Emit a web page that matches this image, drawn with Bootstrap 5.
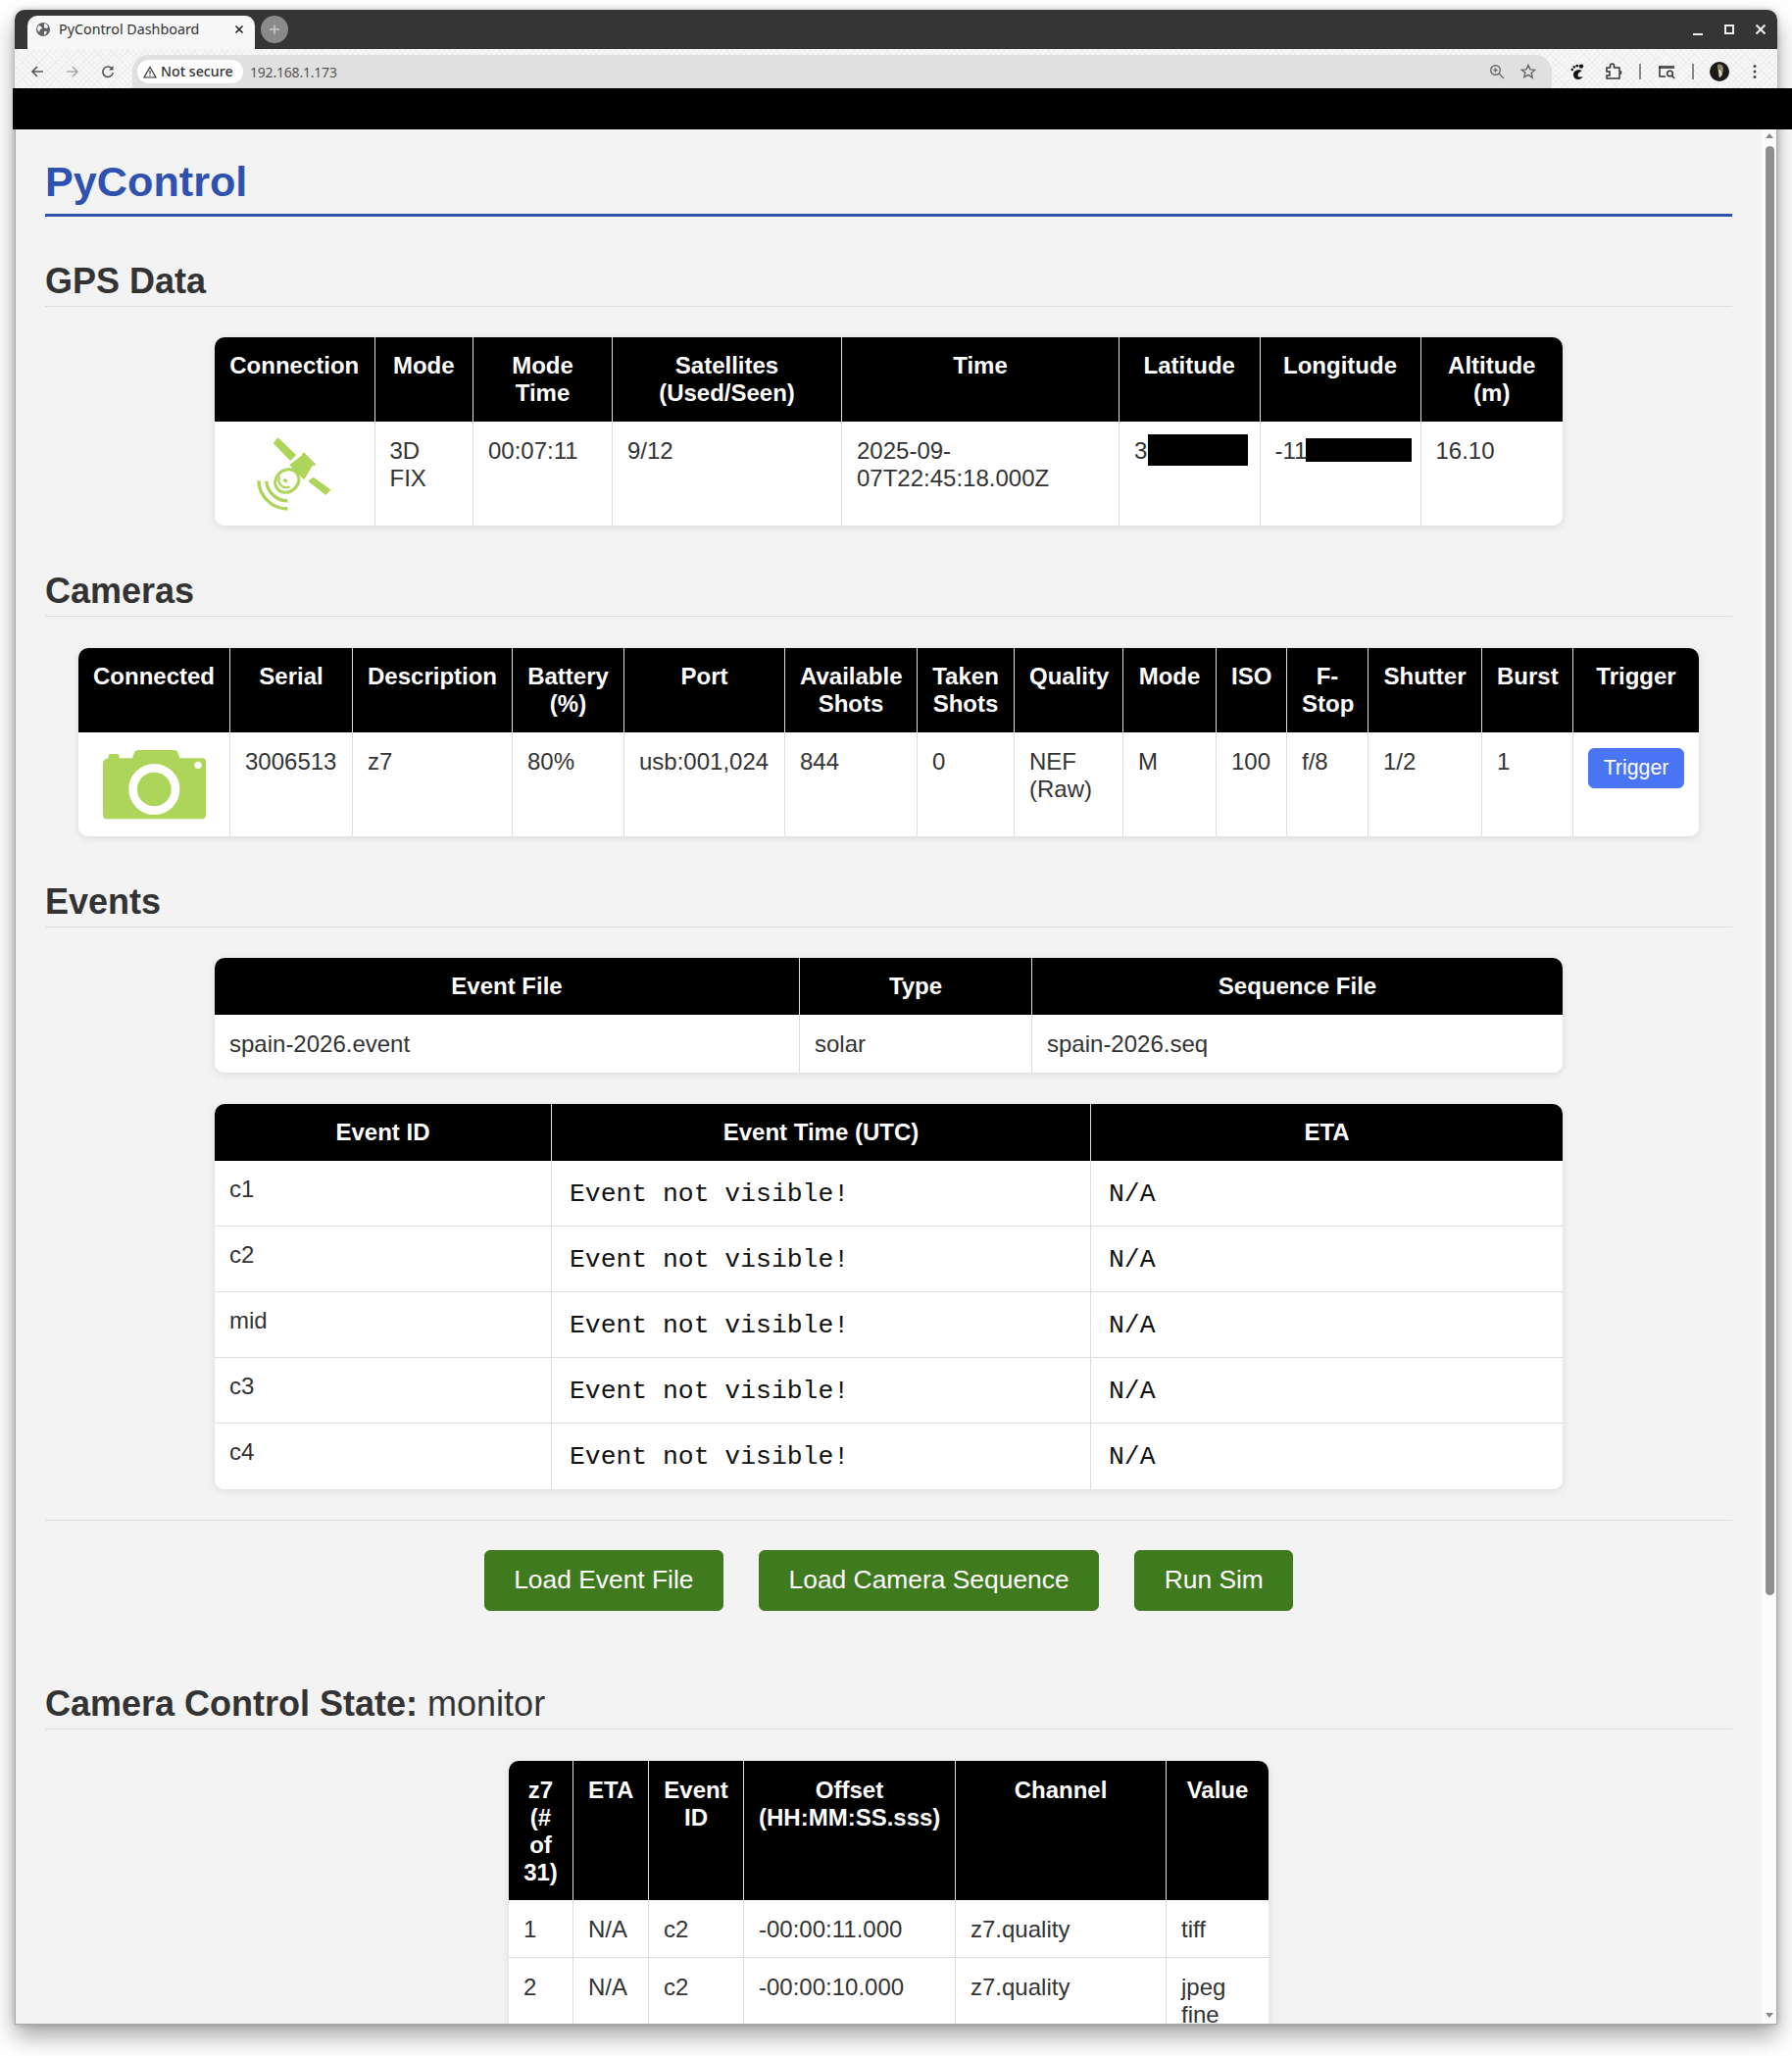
<!DOCTYPE html>
<html lang="en">
<head>
    <meta charset="UTF-8">
    <meta name="viewport" content="width=device-width, initial-scale=1.0">
    <title>PyControl Dashboard</title>
    <link href="https://cdn.jsdelivr.net/npm/bootstrap@5.3.0/dist/css/bootstrap.min.css" rel="stylesheet">
    <style>
        html, body { height: 100%; overflow: hidden; background: #fff; }
        .win-shell {
            width: 1798px; height: 2055px; margin: 10px 0 0 15px;
            display: flex; flex-direction: column;
            border-radius: 10px 10px 0 0;
            box-shadow: 0 12px 24px rgba(0,0,0,.35), 0 0 6px rgba(0,0,0,.2);
        }
        .title-strip {
            height: 40px; flex: none; background: #353535; border-radius: 10px 10px 0 0;
            padding: 6px 10px 0 13px; color: #e8e8e8;
            font-family: "Noto Sans", sans-serif;
        }
        .tab-chip {
            width: 232px; height: 34px; background: #f7f7f7; border-radius: 10px 10px 0 0;
            padding: 0 11px 6px 8px; font-size: 14.3px; color: #333; gap: 8px;
        }
        .tab-label { flex: 1; white-space: nowrap; }
        .new-tab { width: 28px; height: 28px; border-radius: 50%; background: #8a8a8a; margin-left: 6px; }
        .win-btns { gap: 18px; margin-top: -6px; }
        .tool-strip {
            height: 40px; flex: none; padding-top: 6px;
            font-family: "Noto Sans", sans-serif;
            background-color: #f8f8f8;
            background-image: repeating-linear-gradient(45deg, #eee 0 1px, transparent 1px 4px), repeating-linear-gradient(-45deg, #eee 0 1px, transparent 1px 4px);
        }
        .nav-icons { width: 120px; padding-left: 16px; gap: 22px; flex: none; }
        .omni {
            width: 1448px; height: 34px; background: #e0e0e0; border-radius: 17px 17px 0 0;
            padding: 5px 0 0 5px; flex: none;
        }
        .omni-pill {
            height: 24px; width: 108px; background: #fff; border-radius: 12px; font-weight: 500;
            color: #333; padding-left: 6px; gap: 4px; font-size: 14.2px; white-space: nowrap;
        }
        .omni-url { color: #555; height: 24px; margin-left: 7px; font-size: 14px; letter-spacing: -.2px; }
        .omni-tail { margin-left: auto; gap: 16px; padding: 0 16px 5px 0; }
        .tool-tail { flex: 1; padding-left: 19px; }
        .tool-sep { width: 2px; height: 16px; background: #888; }
        .space-21 { margin-right: 21px; }
        .space-17 { margin-right: 17px; }
        .space-16 { margin-right: 16px; }
        .space-24 { margin-right: 24px; }
        .black-strip { height: 42px; flex: none; background: #000; margin: 0 -15px 0 -2px; }
        .page-pane {
            flex: 1; min-height: 0; display: flex;
            border: solid #a9a9a9; border-width: 0 1px 1px 1px;
        }
        .page-main {
            flex: 1; overflow: hidden; background: #f3f3f3; padding: 0 30px;
            font-family: "Liberation Sans", Arial, sans-serif; color: #333;
        }
        .scroll-rail {
            width: 15px; flex: none; background: #fbfbfb; padding: 0 2px 0 3px;
            display: flex; flex-direction: column; align-items: center;
        }
        .arrow-up { margin-top: 4px; width: 0; height: 0; border: solid transparent; border-width: 0 4.5px 5px; border-bottom-color: #888; }
        .scroll-thumb { width: 9px; height: 1478px; margin-top: 8px; background: #8f8f8f; border-radius: 5px; }
        .arrow-down { margin-top: auto; margin-bottom: 6px; width: 0; height: 0; border: solid transparent; border-width: 5px 4.5px 0; border-top-color: #888; }
        .brand-title {
            font-family: inherit; font-size: 43.2px; font-weight: 700; line-height: 49px; color: #2f52b0;
            margin: 0; padding: 29px 0 8px; border-bottom: 3px solid #2f52b0;
        }
        .section-title {
            font-family: inherit; font-size: 36px; font-weight: 700; line-height: 41px; color: #333;
            margin: 0 0 15px; padding-bottom: 5px; border-bottom: 1px solid #ddd;
        }
        .section-title span { font-weight: 400; }
        .gap-gps { margin-top: 45px; }
        .gap-sec { margin-top: 46px; }
        .gap-ctl { margin-top: 74px; }
        .data-grid {
            table-layout: fixed; margin: 0 auto; border-collapse: separate; border-spacing: 0;
            font-size: 24px; line-height: 28px; color: #333; background: #fff;
            border-radius: 10px; box-shadow: 0 2px 8px rgba(0,0,0,.1);
        }
        .data-grid>:not(caption)>*>* {
            padding: 15px; border: 0; border-right: 1px solid #ddd; border-bottom: 1px solid #ddd;
            background: #fff; color: #333; box-shadow: none; vertical-align: top; position: relative;
        }
        .data-grid>:not(caption)>*>*:last-child { border-right: 0; }
        .data-grid>tbody>tr:last-child>* { border-bottom: 0; }
        .data-grid>thead>tr>th {
            background: #000; color: #fff; font-weight: 700; text-align: center;
            border-bottom: 0; border-right-color: #ddd;
        }
        .data-grid>thead>tr>th:first-child { border-top-left-radius: 10px; }
        .data-grid>thead>tr>th:last-child { border-top-right-radius: 10px; }
        .data-grid>tbody>tr:last-child>td:first-child { border-bottom-left-radius: 10px; }
        .data-grid>tbody>tr:last-child>td:last-child { border-bottom-right-radius: 10px; }
        .grid-gap { margin-top: 32px; }
        .grid-gps { width: 1375px; margin-top: 31px; }
        .grid-cam { width: 1653px; }
        .grid-evt { width: 1375px; margin-top: 31px; }
        .grid-times { width: 1375px; }
        .grid-ctl { width: 775px; }
        .data-grid.grid-gps>tbody>tr>td, .data-grid.grid-cam>tbody>tr>td { padding-top: 16px; padding-bottom: 14px; }
        .data-grid.grid-evt>tbody>tr>td { padding-top: 16px; }
        .data-grid.grid-ctl>thead>tr>th, .data-grid.grid-ctl>tbody>tr>td { padding-top: 16px; padding-bottom: 14px; }

        .grid-gps col:nth-child(1) { width: 163.5px; }
        .grid-gps col:nth-child(2) { width: 100.5px; }
        .grid-gps col:nth-child(3) { width: 142px; }
        .grid-gps col:nth-child(4) { width: 234px; }
        .grid-gps col:nth-child(5) { width: 283px; }
        .grid-gps col:nth-child(6) { width: 143.5px; }
        .grid-gps col:nth-child(7) { width: 164px; }
        .grid-gps col:nth-child(8) { width: 144.5px; }

        .grid-cam col:nth-child(1) { width: 155px; }
        .grid-cam col:nth-child(2) { width: 125px; }
        .grid-cam col:nth-child(3) { width: 163px; }
        .grid-cam col:nth-child(4) { width: 114px; }
        .grid-cam col:nth-child(5) { width: 164px; }
        .grid-cam col:nth-child(6) { width: 135px; }
        .grid-cam col:nth-child(7) { width: 99px; }
        .grid-cam col:nth-child(8) { width: 111px; }
        .grid-cam col:nth-child(9) { width: 95px; }
        .grid-cam col:nth-child(10) { width: 72px; }
        .grid-cam col:nth-child(11) { width: 83px; }
        .grid-cam col:nth-child(12) { width: 116px; }
        .grid-cam col:nth-child(13) { width: 93px; }
        .grid-cam col:nth-child(14) { width: 128px; }

        .grid-evt col:nth-child(1) { width: 597px; }
        .grid-evt col:nth-child(2) { width: 237px; }
        .grid-evt col:nth-child(3) { width: 541px; }

        .grid-times col:nth-child(1) { width: 344px; }
        .grid-times col:nth-child(2) { width: 550px; }
        .grid-times col:nth-child(3) { width: 481px; }

        .grid-ctl col:nth-child(1) { width: 66px; }
        .grid-ctl col:nth-child(2) { width: 77px; }
        .grid-ctl col:nth-child(3) { width: 97px; }
        .grid-ctl col:nth-child(4) { width: 216px; }
        .grid-ctl col:nth-child(5) { width: 215px; }
        .grid-ctl col:nth-child(6) { width: 104px; }

        .data-grid>tbody>tr>td.mono-cell {
            font-family: "Liberation Mono", "Courier New", monospace; font-size: 26.4px; color: #111; line-height: 30px;
            padding: 19px 15px 17px 18px;
        }
        .time-row>td { height: 67px; }
        .data-grid>tbody>tr>td.img-center { text-align: center; padding: 15px 0; }
        .data-grid>tbody>tr>td.cam-cell { padding: 18px 0 12px; }
        .status-icon { display: block; margin: 0 auto; }
        .redact-box { position: absolute; background: #000; }
        .redact-lat { left: 29px; top: 13px; width: 102px; height: 32px; }
        .redact-lon { left: 46px; top: 17px; width: 108px; height: 24px; }
        .trigger-btn {
            --bs-btn-bg: #4a76f5; --bs-btn-border-color: #4a76f5;
            font-size: 21.3px; line-height: 25px; padding: 7px 14px; border-radius: 6px; width: 98px;
        }
        .rule-line { margin: 31px 0 30px; border: 0; border-top: 1px solid #ddd; opacity: 1; }
        .action-row { gap: 36px; }
        .action-btn {
            --bs-btn-bg: #3f7a1e; --bs-btn-border-color: #3f7a1e;
            font-size: 26.4px; line-height: 29.5px; padding: 15px 29.5px; border-radius: 6px;
        }
    </style>
</head>
<body>
    <div class="win-shell">
        <div class="title-strip d-flex">
            <div class="tab-chip d-flex align-items-center">
                <svg width="16" height="16" viewBox="0 0 16 16"><circle cx="8" cy="8" r="7" fill="#5f6368"/><path d="M3 4l3 1 1 2-2 1-1 3-2-3zM9 2l3 1 1 3-2 1-2-1zM9 10h3l-2 4-1-1z" fill="#f7f7f7"/></svg>
                <span class="tab-label">PyControl Dashboard</span>
                <svg width="10" height="10" viewBox="0 0 10 10"><path d="M1.5 1.5l7 7M8.500 1.5l-7 7" stroke="#222" stroke-width="1.6"/></svg>
            </div>
            <div class="new-tab d-flex align-items-center justify-content-center">
                <svg width="12" height="12" viewBox="0 0 12 12"><path d="M6 1v10M1 6h10" stroke="#ccc" stroke-width="1.4"/></svg>
            </div>
            <div class="win-btns d-flex align-items-center ms-auto">
                <svg width="14" height="14" viewBox="0 0 14 14"><path d="M2 12h10" stroke="#eee" stroke-width="2"/></svg>
                <svg width="14" height="14" viewBox="0 0 14 14"><rect x="3" y="3" width="8" height="8" fill="none" stroke="#eee" stroke-width="2"/></svg>
                <svg width="14" height="14" viewBox="0 0 14 14"><path d="M2.500 2.500l9 9M11.500 2.500l-9 9" stroke="#eee" stroke-width="2"/></svg>
            </div>
        </div>
        <div class="tool-strip d-flex">
            <div class="nav-icons d-flex align-items-center">
                <svg width="14" height="14" viewBox="0 0 14 14"><path d="M13 7H2M7 2L2 7l5 5" fill="none" stroke="#555" stroke-width="1.6"/></svg>
                <svg width="14" height="14" viewBox="0 0 14 14"><path d="M1 7h11M7 2l5 5-5 5" fill="none" stroke="#aaa" stroke-width="1.6"/></svg>
                <svg width="14" height="14" viewBox="0 0 14 14"><path d="M11.500 4.500A5.200 5.200 0 1 0 12.200 8" fill="none" stroke="#555" stroke-width="1.6"/><path d="M12.500 1v4.500H8z" fill="#555"/></svg>
            </div>
            <div class="omni d-flex">
                <div class="omni-pill d-flex align-items-center">
                    <svg width="14" height="13" viewBox="0 0 14 13"><path d="M7 1.500L13 12H1zM7 5v3.600M7 9.600v1.200" fill="none" stroke="#333" stroke-width="1.2"/></svg>
                    <span>Not secure</span>
                </div>
                <span class="omni-url d-flex align-items-center">192.168.1.173</span>
                <div class="omni-tail d-flex align-items-center">
                    <svg width="16" height="16" viewBox="0 0 16 16"><circle cx="6.500" cy="6.500" r="4.800" fill="none" stroke="#666" stroke-width="1.4"/><path d="M10 10l5 5M4.500 6.500h4M6.500 4.500v4" stroke="#666" stroke-width="1.4"/></svg>
                    <svg width="16" height="16" viewBox="0 0 16 16"><path d="M8 1.500l2 4.400 4.600.5-3.400 3.100 1 4.700L8 11.300l-4.200 2.400 1-4.700L1.400 6.400 6 5.900z" fill="none" stroke="#666" stroke-width="1.4"/></svg>
                </div>
            </div>
            <div class="tool-tail d-flex align-items-center">
                <svg class="space-21" width="14" height="16" viewBox="0 0 14 16"><path d="M12 7C8 5 3 7 3 11s3 5 5 5 4-1 4.500-3c-2 1-5 1-5-1.500 0-2 2-3 4.500-4.500z" fill="#111"/><circle cx="1.800" cy="6" r="1.300" fill="#111"/><circle cx="3.800" cy="3.400" r="1.300" fill="#111"/><circle cx="6.800" cy="2.200" r="1.400" fill="#111"/><circle cx="11" cy="2.600" r="2.200" fill="#111"/></svg>
                <svg class="space-17" width="18" height="18" viewBox="0 0 18 18"><path d="M2 5h3.500V3a2 2 0 0 1 4 0v2H15v4h1.500v2H15v5H2v-3h3v-4H2z" fill="none" stroke="#333" stroke-width="1.500"/></svg>
                <span class="tool-sep space-17"></span>
                <svg class="space-17" width="18" height="16" viewBox="0 0 18 16"><path d="M1 14V2h16v3H1" fill="#555"/><path d="M2 3v10h6" fill="none" stroke="#333" stroke-width="1.500"/><circle cx="12.500" cy="10" r="2.800" fill="none" stroke="#333" stroke-width="1.400"/><path d="M14.500 12l2.500 3" stroke="#333" stroke-width="1.400"/></svg>
                <span class="tool-sep space-16"></span>
                <svg class="space-24" width="20" height="20" viewBox="0 0 20 20"><circle cx="10" cy="10" r="10" fill="#1b1a17"/><path d="M8 3c3-1.500 6 .5 6 3.500 0 3-1 4.500-1 7.500l-4 1c1-3-1.500-8-1-12z" fill="#8f826b"/><path d="M9 8c2 0 3.500 1 3.500 3.500S11 16 10 16z" fill="#d9d2c2"/></svg>
                <svg width="4" height="16" viewBox="0 0 4 16"><circle cx="2" cy="2.500" r="1.500" fill="#444"/><circle cx="2" cy="8" r="1.500" fill="#444"/><circle cx="2" cy="13.500" r="1.500" fill="#444"/></svg>
            </div>
        </div>
        <div class="black-strip"></div>
        <div class="page-pane">
            <div class="page-main">
                <h1 class="brand-title">PyControl</h1>

                <h2 class="section-title gap-gps">GPS Data</h2>
                <table class="table data-grid grid-gps">
                    <colgroup><col><col><col><col><col><col><col><col></colgroup>
                    <thead>
                        <tr><th>Connection</th><th>Mode</th><th>Mode Time</th><th>Satellites (Used/Seen)</th><th>Time</th><th>Latitude</th><th>Longitude</th><th>Altitude (m)</th></tr>
                    </thead>
                    <tbody>
                        <tr>
                            <td class="img-center">
                                <svg class="status-icon" width="76" height="76" viewBox="188 345 227 227">
                                    <path d="M252 349l56 53-18 18-52-54z" fill="#acd55a"/>
                                    <path d="M360 470l54 38-16 16-54-42z" fill="#acd55a"/>
                                    <path d="M332 394l36 36-6 6-4-3-26 44-45-45 40-30-3-3z" fill="#acd55a"/>
                                    <ellipse cx="280" cy="481" rx="38" ry="33" transform="rotate(-40 280 481)" fill="#fff" stroke="#acd55a" stroke-width="9"/>
                                    <path d="M258 468a22 22 0 0 0 30 30" fill="none" stroke="#acd55a" stroke-width="7"/>
                                    <path d="M270 476l10 8" stroke="#acd55a" stroke-width="9"/>
                                    <g fill="none" stroke="#acd55a" stroke-width="10">
                                        <path d="M194 480a88 88 0 0 0 88 86"/>
                                        <path d="M217 482a66 66 0 0 0 65 60"/>
                                    </g>
                                </svg>
                            </td>
                            <td>3D FIX</td>
                            <td>00:07:11</td>
                            <td>9/12</td>
                            <td>2025-09-07T22:45:18.000Z</td>
                            <td>3<span class="redact-box redact-lat"></span></td>
                            <td>-11<span class="redact-box redact-lon"></span></td>
                            <td>16.10</td>
                        </tr>
                    </tbody>
                </table>

                <h2 class="section-title gap-sec">Cameras</h2>
                <table class="table data-grid grid-cam grid-gap">
                    <colgroup><col><col><col><col><col><col><col><col><col><col><col><col><col><col></colgroup>
                    <thead>
                        <tr><th>Connected</th><th>Serial</th><th>Description</th><th>Battery (%)</th><th>Port</th><th>Available Shots</th><th>Taken Shots</th><th>Quality</th><th>Mode</th><th>ISO</th><th>F-Stop</th><th>Shutter</th><th>Burst</th><th>Trigger</th></tr>
                    </thead>
                    <tbody>
                        <tr>
                            <td class="img-center cam-cell">
                                <svg class="status-icon" width="105" height="76" viewBox="105 345 315 228" preserveAspectRatio="none">
                                    <path d="M105 385q0-12 17-15v-6q0-7 8-7h17q8 0 8 7v6h40l5-15q3-10 15-10h105q12 0 15 10l5 15h70q10 0 10 12v160q0 14-12 14H117q-12 0-12-14z" fill="#acd55a"/>
                                    <circle cx="262" cy="465" r="65" fill="#acd55a" stroke="#fff" stroke-width="26"/>
                                    <circle cx="396" cy="391" r="11" fill="#fff"/>
                                </svg>
                            </td>
                            <td>3006513</td>
                            <td>z7</td>
                            <td>80%</td>
                            <td>usb:001,024</td>
                            <td>844</td>
                            <td>0</td>
                            <td>NEF (Raw)</td>
                            <td>M</td>
                            <td>100</td>
                            <td>f/8</td>
                            <td>1/2</td>
                            <td>1</td>
                            <td><button type="button" class="btn btn-primary trigger-btn">Trigger</button></td>
                        </tr>
                    </tbody>
                </table>

                <h2 class="section-title gap-sec">Events</h2>
                <table class="table data-grid grid-evt">
                    <colgroup><col><col><col></colgroup>
                    <thead><tr><th>Event File</th><th>Type</th><th>Sequence File</th></tr></thead>
                    <tbody><tr><td>spain-2026.event</td><td>solar</td><td>spain-2026.seq</td></tr></tbody>
                </table>
                <table class="table data-grid grid-times grid-gap">
                    <colgroup><col><col><col></colgroup>
                    <thead><tr><th>Event ID</th><th>Event Time (UTC)</th><th>ETA</th></tr></thead>
                    <tbody>
                        <tr class="time-row"><td>c1</td><td class="mono-cell">Event not visible!</td><td class="mono-cell">N/A</td></tr>
                        <tr class="time-row"><td>c2</td><td class="mono-cell">Event not visible!</td><td class="mono-cell">N/A</td></tr>
                        <tr class="time-row"><td>mid</td><td class="mono-cell">Event not visible!</td><td class="mono-cell">N/A</td></tr>
                        <tr class="time-row"><td>c3</td><td class="mono-cell">Event not visible!</td><td class="mono-cell">N/A</td></tr>
                        <tr class="time-row"><td>c4</td><td class="mono-cell">Event not visible!</td><td class="mono-cell">N/A</td></tr>
                    </tbody>
                </table>

                <hr class="rule-line">
                <div class="action-row d-flex justify-content-center">
                    <button type="button" class="btn btn-success action-btn">Load Event File</button>
                    <button type="button" class="btn btn-success action-btn">Load Camera Sequence</button>
                    <button type="button" class="btn btn-success action-btn">Run Sim</button>
                </div>

                <h2 class="section-title gap-ctl">Camera Control State: <span>monitor</span></h2>
                <table class="table data-grid grid-ctl grid-gap">
                    <colgroup><col><col><col><col><col><col></colgroup>
                    <thead><tr><th>z7 (# of 31)</th><th>ETA</th><th>Event ID</th><th>Offset (HH:MM:SS.sss)</th><th>Channel</th><th>Value</th></tr></thead>
                    <tbody>
                        <tr><td>1</td><td>N/A</td><td>c2</td><td>-00:00:11.000</td><td>z7.quality</td><td>tiff</td></tr>
                        <tr><td>2</td><td>N/A</td><td>c2</td><td>-00:00:10.000</td><td>z7.quality</td><td>jpeg fine</td></tr>
                    </tbody>
                </table>
            </div>
            <div class="scroll-rail">
                <div class="arrow-up"></div>
                <div class="scroll-thumb"></div>
                <div class="arrow-down"></div>
            </div>
        </div>
    </div>
    <script src="https://cdn.jsdelivr.net/npm/bootstrap@5.3.0/dist/js/bootstrap.bundle.min.js"></script>
</body>
</html>
